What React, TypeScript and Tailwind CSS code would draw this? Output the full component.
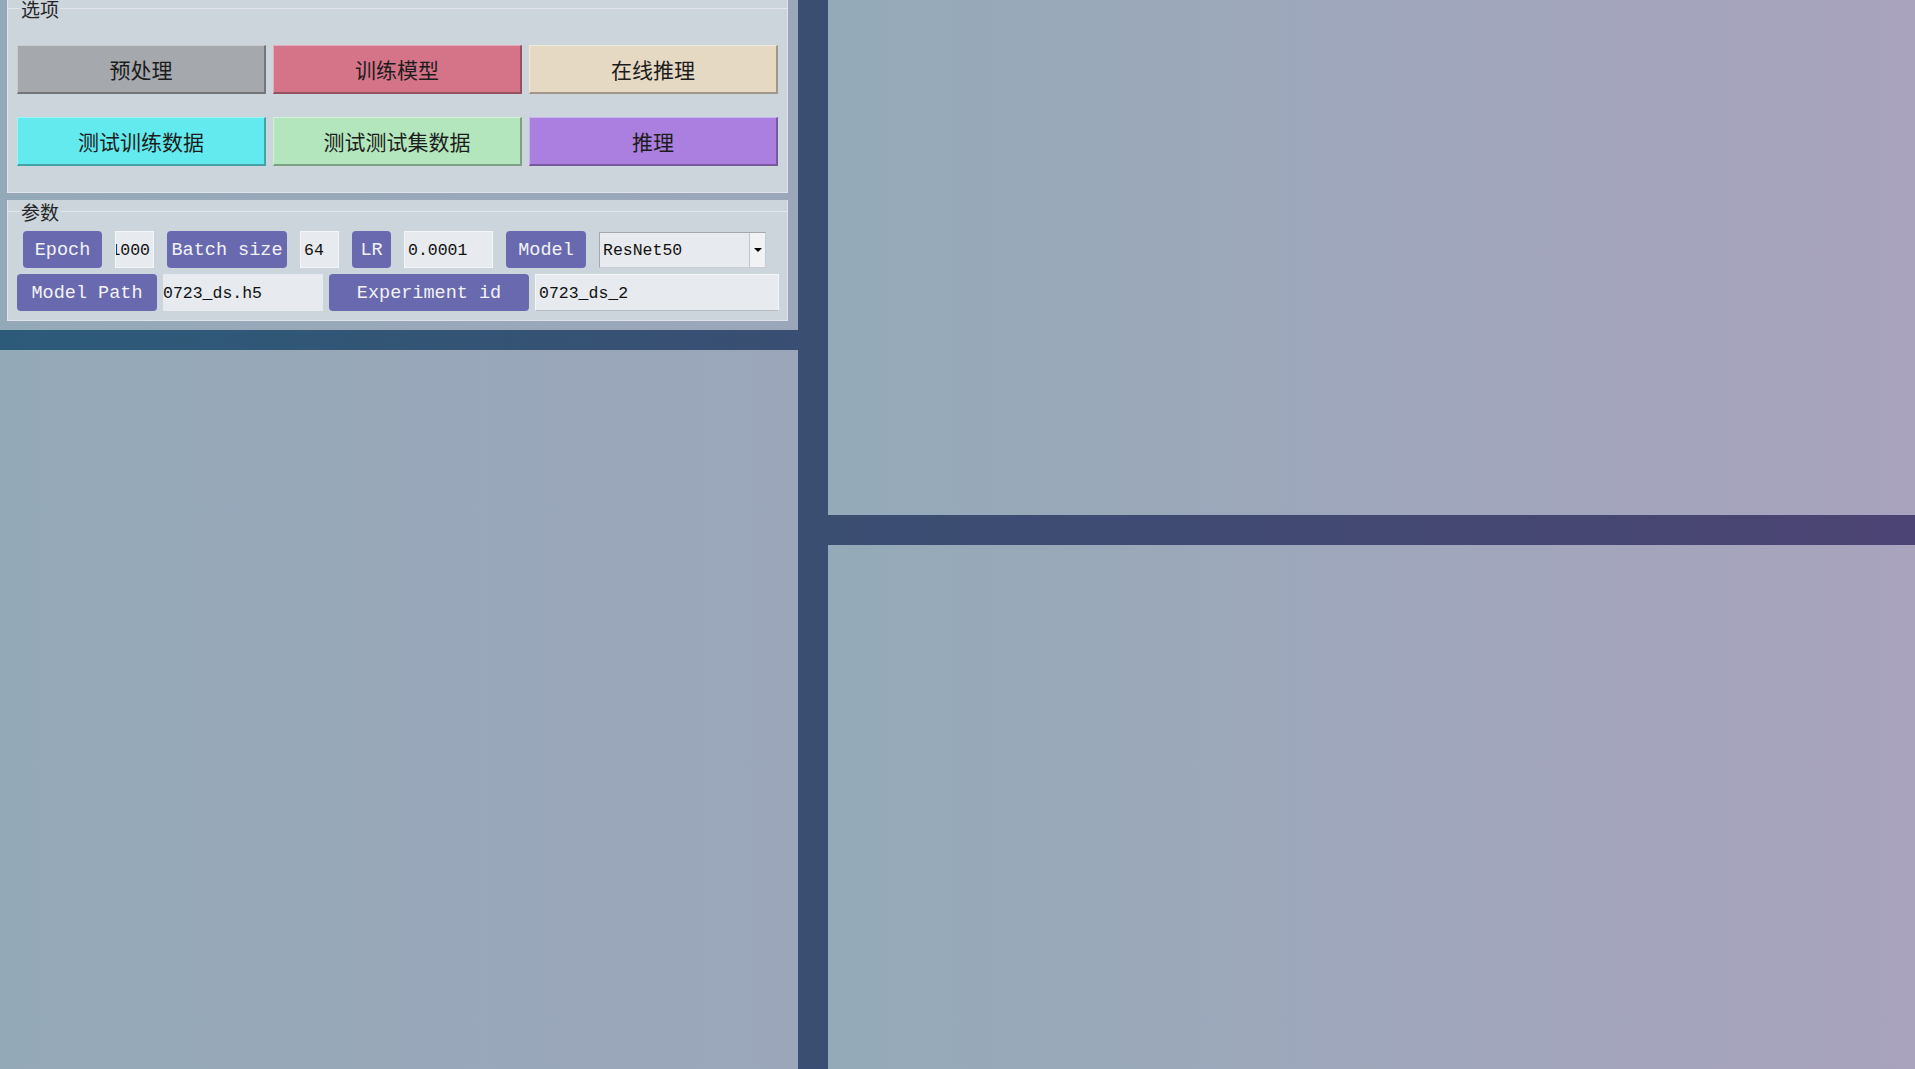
import type { ReactNode } from 'react';

const buttons = [
    { text: '预处理', bg: 'bg-[#a5a8ac]' },
    { text: '训练模型', bg: 'bg-[#d57489]' },
    { text: '在线推理', bg: 'bg-[#e6d9c3]' },
    { text: '测试训练数据', bg: 'bg-[#63eaee]' },
    { text: '测试测试集数据', bg: 'bg-[#b3e6bc]' },
    { text: '推理', bg: 'bg-[#ab7fe0]' },
];

const labelCls =
    "flex h-full shrink-0 items-center justify-center rounded-[4px] bg-[#6869ae] pt-[3px] text-[18.5px] leading-none text-[#f3f3f7] font-['Liberation_Mono',monospace]";
const inputCls =
    "flex h-full shrink-0 items-center overflow-hidden whitespace-nowrap bg-[#e7eaee] px-[3px] pt-[3px] text-[16.5px] leading-none text-[#111] font-['Liberation_Mono',monospace]";

function GroupBox({ title, className, children }: { title: string; className?: string; children: ReactNode }) {
    return (
        <div className={`flex flex-col border-x border-b border-[#dfe4ea] bg-[#ccd4dc] ${className ?? ''}`}>
            <div className="flex h-[22px] items-center">
                <div className="h-px w-[12px] bg-[#e3e7ec]" />
                <span className="px-[1px] text-[19px] leading-none text-[#262626] font-['Noto_Sans_CJK_SC',sans-serif]">
                    {title}
                </span>
                <div className="h-px flex-1 bg-[#e3e7ec]" />
            </div>
            {children}
        </div>
    );
}

export default function App() {
    return (
        <div className="flex h-screen w-full overflow-hidden bg-[linear-gradient(to_right,#2c5b79,#3a4e72_43%,#4c4474)]">
            {/* left column */}
            <div className="flex w-[798px] shrink-0 flex-col gap-[20px]">
                <div className="h-[330px] shrink-0 bg-[linear-gradient(to_right,#94a9b8,#9ba6ba)] pl-[7px] pr-[10px]">
                    <GroupBox title="选项" className="-mt-[3px] pb-[26px]">
                        <div className="mt-[26px] grid grid-cols-[repeat(3,249px)] gap-x-[7px] gap-y-[23px] pl-[9px]">
                            {buttons.map((b) => (
                                <div
                                    key={b.text}
                                    className={`flex h-[49px] items-center justify-center border-t border-l border-r-2 border-b-2 border-t-white/40 border-l-white/40 border-r-black/30 border-b-black/30 ${b.bg} pt-[2px] text-[21px] text-[#1c1c1c] font-['Noto_Sans_CJK_SC',sans-serif]`}
                                >
                                    {b.text}
                                </div>
                            ))}
                        </div>
                    </GroupBox>

                    <GroupBox title="参数" className="mt-[7px] pb-[9px]">
                        <div className="mt-[9px] flex h-[37px] items-center gap-[13px] pl-[15px]">
                            <div className={`${labelCls} w-[79px]`}>Epoch</div>
                            <div className={`${inputCls} w-[39px] justify-end border border-[#f3f5f7]`}>1000</div>
                            <div className={`${labelCls} w-[120px]`}>Batch size</div>
                            <div className={`${inputCls} w-[39px] border border-[#f3f5f7]`}>64</div>
                            <div className={`${labelCls} w-[39px]`}>LR</div>
                            <div className={`${inputCls} w-[89px] border border-[#f3f5f7]`}>0.0001</div>
                            <div className={`${labelCls} w-[80px]`}>Model</div>
                            <div className="flex h-[36px] w-[167px] shrink-0 border border-[#a4a8ae] border-r-[#c9cdd2] border-b-[#c9cdd2] bg-[#e7eaee]">
                                <div className="flex flex-1 items-center px-[3px] pt-[3px] text-[16.5px] leading-none text-[#111] font-['Liberation_Mono',monospace]">
                                    ResNet50
                                </div>
                                <div className="flex w-[16px] items-center justify-center border-l border-[#c3c6cb] bg-[#f1f2f4]">
                                    <div className="h-0 w-0 border-x-[4px] border-t-[4px] border-x-transparent border-t-black" />
                                </div>
                            </div>
                        </div>
                        <div className="mt-[6px] flex h-[37px] items-center gap-[6px] pl-[9px]">
                            <div className={`${labelCls} w-[140px]`}>Model Path</div>
                            <div className={`${inputCls} w-[160px] !px-0`}>0723_ds.h5</div>
                            <div className={`${labelCls} w-[200px]`}>Experiment id</div>
                            <div className={`${inputCls} w-[244px] border border-[#f4f6f8] border-b-[#b9bec5]`}>0723_ds_2</div>
                        </div>
                    </GroupBox>
                </div>
                <div className="flex-1 bg-[linear-gradient(to_right,#94a9b8,#9ba6ba)]" />
            </div>

            {/* right column */}
            <div className="ml-[30px] flex flex-1 flex-col gap-[30px]">
                <div className="h-[515px] shrink-0 bg-[linear-gradient(to_right,#94aab8,#a9a3be)]" />
                <div className="flex-1 bg-[linear-gradient(to_right,#94aab8,#a9a3be)]" />
            </div>
        </div>
    );
}
